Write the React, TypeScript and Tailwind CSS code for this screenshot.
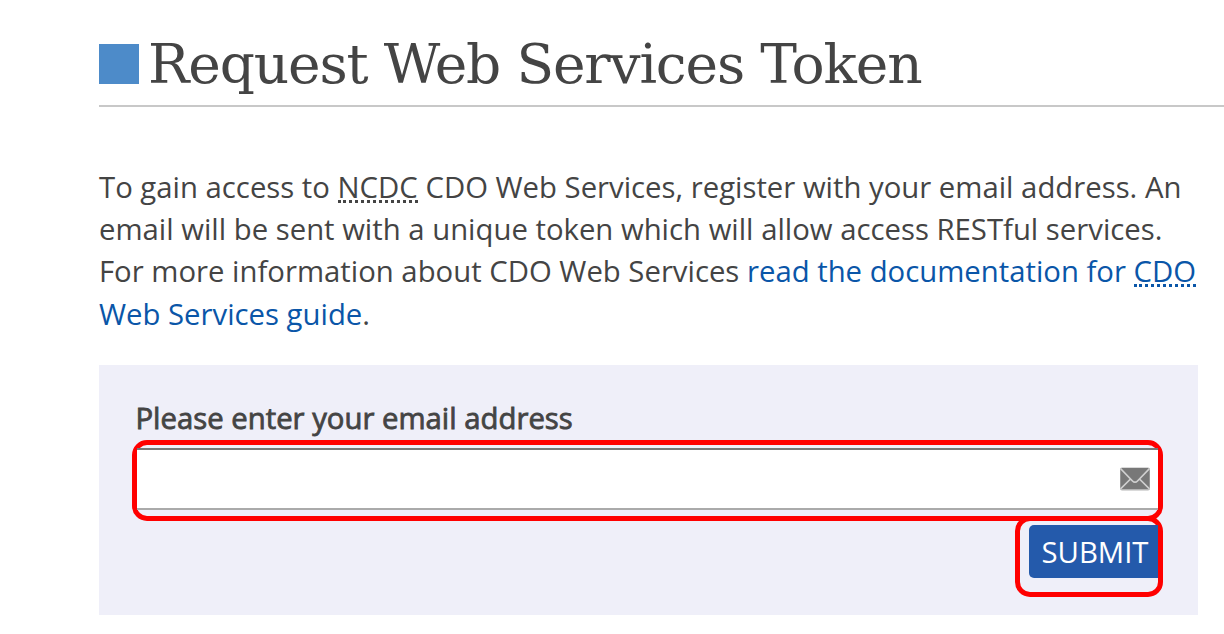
function MailIcon() {
  return (
    <svg width="30" height="24" viewBox="0 0 30 24" fill="none">
      <rect y="0.5" width="30" height="23" rx="2" fill="#b5b5b5" />
      <rect x="0.5" y="1" width="29" height="21" rx="1.5" fill="#787878" />
      <path
        d="M0.5 1.5L12.5 14Q15 16.5 17.5 14L29.5 1.5M0.5 22L10.5 12M29.5 22L19.5 12"
        stroke="#d0d0d0"
        strokeWidth="1.7"
      />
    </svg>
  );
}

export default function App() {
  return (
    <main className="h-[634px] w-[1224px] overflow-hidden bg-white pl-[99px] font-['Open_Sans',sans-serif] text-[#444]">
      <header className="flex h-[107px] items-start border-b-2 border-[#c8c8c8] pt-[44px]">
        <span className="size-10 shrink-0 bg-[#4d8bc9]" />
        <h1 className="-mt-[18px] ml-[9px] whitespace-nowrap font-['DejaVu_Serif',serif] text-[55px] leading-[76px] tracking-[-1.15px]">
          Request Web Services Token
        </h1>
      </header>

      <p className="mt-[59px] whitespace-nowrap text-[29.31px] leading-[42.2px]">
        To gain access to{" "}
        <abbr className="inline-block h-[37px] border-b-[3px] border-dotted border-[#444] align-top no-underline">NCDC</abbr>{" "}
        CDO Web Services, register with your email address. An
        <br />
        email will be sent with a unique token which will allow access RESTful services.
        <br />
        For more information about CDO Web Services{" "}
        <a className="text-[#0a56a8]">
          read the documentation for{" "}
          <abbr className="inline-block h-[37px] border-b-[3px] border-dotted border-[#0a56a8] align-top no-underline">CDO</abbr>
          <br />
          Web Services guide
        </a>
        .
      </p>

      <form className="mt-[29.7px] flex h-[250px] w-[1099px] flex-col bg-[#efeff9] pl-[33px] pt-[33.5px]">
        <label
          htmlFor="email"
          className="h-[42px] whitespace-nowrap pl-[3.5px] text-[29.3px] leading-[40px] [-webkit-text-stroke:0.8px_#444]"
        >
          Please enter your email address
        </label>
        <div className="flex h-[81px] w-[1031px] shrink-0 items-start rounded-[15px] border-[5px] border-[#ff0000] pt-[3px]">
          <div className="flex h-[62px] w-full items-center border-b-2 border-t-2 border-b-[#aaa] border-t-[#777] bg-white pr-[8px]">
            <input id="email" className="h-full min-w-0 flex-1 outline-none" />
            <MailIcon />
          </div>
        </div>
        <div className="-mt-[5px] ml-[883px] flex h-[81px] w-[148px] shrink-0 items-start rounded-[15px] border-[5px] border-[#ff0000] pl-[9px] pt-[4px]">
          <button
            type="button"
            className="h-[53px] w-full rounded-l-[5px] bg-[#245aab] pl-[3px] pt-[1px] text-[29.3px] leading-[53px] text-white"
          >
            SUBMIT
          </button>
        </div>
      </form>
    </main>
  );
}
